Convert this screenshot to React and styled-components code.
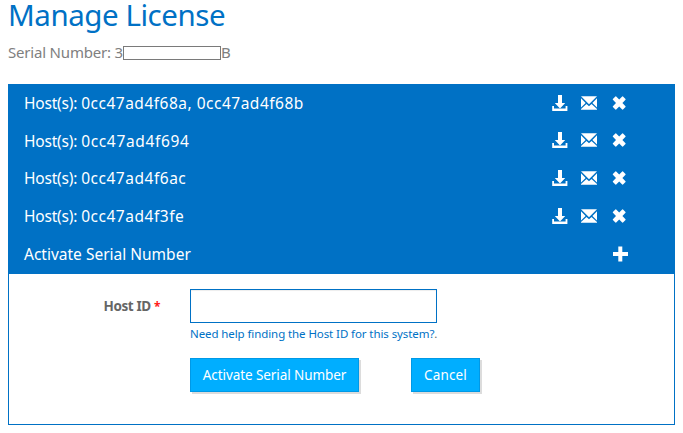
import React from 'react';
import styled, { createGlobalStyle } from 'styled-components';

const GlobalStyle = createGlobalStyle`
  * { box-sizing: border-box; }
  body {
    margin: 0;
    background: #fff;
    font-family: "Noto Sans", "Open Sans", sans-serif;
    overflow: hidden;
  }
`;

const Page = styled.main`
  width: 683px;
  height: 433px;
  padding: 0 8px;
`;

const Title = styled.h1`
  margin: 0;
  height: 36px;
  line-height: 29px;
  font-size: 29.5px;
  font-weight: 400;
  letter-spacing: -0.45px;
  color: #0071c5;
`;

const Serial = styled.div`
  display: flex;
  align-items: center;
  height: 34px;
  margin-bottom: 14px;
  font-size: 15px;
  line-height: 32px;
  letter-spacing: -0.19px;
  color: #808080;
`;

const SerialText = styled.span`
  height: 34px;
`;

const Redacted = styled.span`
  width: 98px;
  height: 14px;
  border: 1px solid #7a7a7a;
`;

const Panel = styled.section`
  width: 667px;
  height: 341px;
  border: 1px solid #0071c5;
`;

const Hosts = styled.ul`
  margin: 0;
  padding: 0 46px 0 15px;
  height: 189px;
  list-style: none;
  background: #0071c5;
  color: #fff;
`;

const Row = styled.li`
  display: flex;
  justify-content: space-between;
  align-items: center;
  height: 37.6px;
  font-size: 15.5px;
`;

const RowText = styled.span`
  display: flex;
  gap: 4px;
  padding-bottom: 1px;
`;

const HostLabel = styled.span`
  letter-spacing: -0.2px;
`;

const HostValue = styled.span`
  letter-spacing: ${(p) => p.$spacing};
`;

const Actions = styled.div`
  display: flex;
  align-items: center;
  gap: 13px;
  padding-bottom: 2px;
`;

const Glyph = styled.svg`
  display: block;
  width: 16px;
  height: 16px;
  fill: #fff;
`;

const RemoveGlyph = styled(Glyph)`
  margin-left: 2px;
`;

const Form = styled.form`
  display: grid;
  grid-template-columns: 151px 1fr;
  column-gap: 30px;
  padding-top: 15px;
`;

const Label = styled.label`
  text-align: right;
  line-height: 34px;
  font-size: 13.5px;
  font-weight: 700;
  letter-spacing: -0.4px;
  color: #666;
`;

const Required = styled.span`
  font-size: 12px;
  color: #ff1a1a;
`;

const Input = styled.input`
  display: block;
  width: 247px;
  height: 34px;
  border: 1px solid #0071c5;
  border-radius: 0;
  outline: 0;
  padding: 0 10px;
  box-shadow: inset 0 1px 1px rgba(0, 0, 0, 0.075);
`;

const Help = styled.div`
  height: 22px;
  line-height: 22px;
  font-size: 11.5px;
  letter-spacing: -0.09px;
  white-space: nowrap;
  color: #666;
`;

const HelpLink = styled.a`
  color: #0071c5;
`;

const Buttons = styled.div`
  display: flex;
  gap: 52px;
  margin-top: 13px;
`;

const Button = styled.button`
  width: ${(p) => p.$width};
  height: 34px;
  padding: 0;
  border: 1px solid #0099e6;
  border-radius: 0;
  background: #00aeff;
  box-shadow: 2px 2px 0 #dcdcdc;
  color: #fff;
  font-family: inherit;
  font-size: 13.5px;
  letter-spacing: ${(p) => p.$spacing};
  white-space: nowrap;
`;

const DownloadIcon = () => (
  <Glyph viewBox="0 0 16 16">
    <path d="M6 0H10V8H13.2L8 13.4L2.8 8H6Z" />
    <path d="M.2 11H2V13.6H13.6V11H15.4V16H.2Z" />
  </Glyph>
);

const MailIcon = () => (
  <Glyph viewBox="0 0 16 16">
    <path d="M0 1.2H16L8 9.2Z" />
    <path d="M0 3.2L4.6 8L0 12.4ZM16 3.2L11.4 8L16 12.4Z" />
    <path d="M0 14.8V14L5.5 8.9L8 11.3L10.5 8.9L16 14V14.8Z" />
  </Glyph>
);

const RemoveIcon = () => (
  <RemoveGlyph viewBox="0 0 16 16">
    <path d="M4.2 1.5L7.2 4.5L10.2 1.5Q10.6 1.2 11 1.5L13.5 4Q13.8 4.4 13.5 4.8L10.4 8L13.5 11.2Q13.8 11.6 13.5 12L11 14.5Q10.6 14.8 10.2 14.5L7.2 11.5L4.2 14.5Q3.8 14.8 3.4 14.5L.9 12Q.6 11.6 .9 11.2L4 8L.9 4.8Q.6 4.4 .9 4L3.4 1.5Q3.8 1.2 4.2 1.5Z" />
  </RemoveGlyph>
);

const PlusIcon = () => (
  <Glyph viewBox="0 0 16 16">
    <path d="M6.3 .5H10.3V6H16V10H10.3V15.5H6.3V10H1V6H6.3Z" />
  </Glyph>
);

const hosts = [
  { id: '0cc47ad4f68a, 0cc47ad4f68b', spacing: '0.5px' },
  { id: '0cc47ad4f694', spacing: '0.65px' },
  { id: '0cc47ad4f6ac', spacing: '0.52px' },
  { id: '0cc47ad4f3fe', spacing: '0.52px' },
];

export default function App() {
  return (
    <Page>
      <GlobalStyle />
      <Title>Manage License</Title>
      <Serial>
        <SerialText>Serial Number: 3</SerialText>
        <Redacted />
        <SerialText>B</SerialText>
      </Serial>
      <Panel>
        <Hosts>
          {hosts.map(({ id, spacing }) => (
            <Row key={id}>
              <RowText>
                <HostLabel>Host(s):</HostLabel>
                <HostValue $spacing={spacing}>{id}</HostValue>
              </RowText>
              <Actions>
                <DownloadIcon />
                <MailIcon />
                <RemoveIcon />
              </Actions>
            </Row>
          ))}
          <Row>
            <RowText>Activate Serial Number</RowText>
            <PlusIcon />
          </Row>
        </Hosts>
        <Form onSubmit={(e) => e.preventDefault()}>
          <Label htmlFor="host-id">
            Host ID <Required>*</Required>
          </Label>
          <div>
            <Input id="host-id" />
            <Help>
              <HelpLink>Need help finding the Host ID for this system?</HelpLink>.
            </Help>
            <Buttons>
              <Button type="submit" $width="169px" $spacing="-0.08px">Activate Serial Number</Button>
              <Button type="button" $width="69px" $spacing="0.15px">Cancel</Button>
            </Buttons>
          </div>
        </Form>
      </Panel>
    </Page>
  );
}
